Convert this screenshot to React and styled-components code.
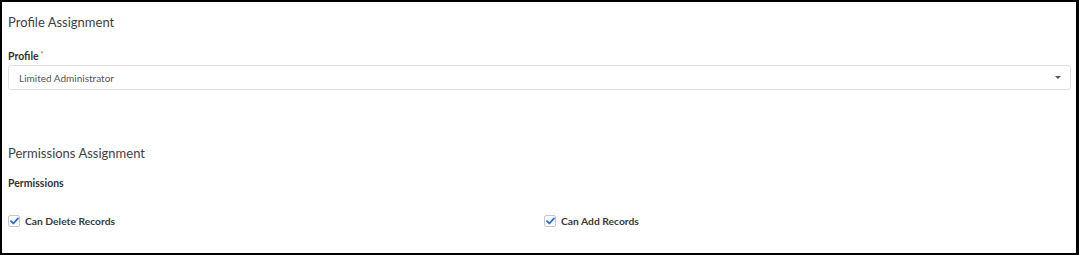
import React from "react";
import styled, { createGlobalStyle } from "styled-components";

const GlobalStyle = createGlobalStyle`
  html, body {
    margin: 0;
    padding: 0;
    background: #fff;
  }
  * {
    box-sizing: border-box;
  }
`;

const Frame = styled.div`
  width: 1079px;
  height: 255px;
  border: 2px solid #000;
  border-right-width: 3px;
  background: #fff;
  padding: 0 6px 0 6px;
  font-family: Lato, "Open Sans", sans-serif;
  color: #444;
`;

const SectionTitle = styled.h2`
  margin: 0;
  font-size: 13px;
  font-weight: 400;
  color: #3f3f3f;
  line-height: 16px;
  padding-top: ${(p) => p.$top}px;
`;

const FieldLabel = styled.div`
  font-size: 10.5px;
  font-weight: 700;
  color: #333;
  line-height: 12px;
  margin-top: ${(p) => p.$top}px;
`;

const Required = styled.span`
  color: #e05252;
  font-size: 7px;
  vertical-align: top;
  margin-left: 2px;
  position: relative;
  top: -2px;
`;

const Select = styled.div`
  margin-top: 3px;
  height: 25px;
  width: 1063px;
  border: 1px solid #e2e2e2;
  border-radius: 3px;
  display: flex;
  align-items: center;
  justify-content: space-between;
  padding: 0 9px 0 10px;
  font-size: 10px;
  color: #555;
`;

const Caret = styled.span`
  width: 0;
  height: 0;
  border-left: 3px solid transparent;
  border-right: 3px solid transparent;
  border-top: 3px solid #555;
`;

const CheckGrid = styled.div`
  display: grid;
  grid-template-columns: 536px 1fr;
  margin-top: 26px;
`;

const CheckRow = styled.label`
  display: flex;
  align-items: center;
  gap: 5px;
  font-size: 10.3px;
  font-weight: 700;
  color: #3a3a3a;
`;

const Box = styled.span`
  width: 12px;
  height: 12px;
  border: 1px solid #c8c8c8;
  border-radius: 2px;
  display: flex;
  align-items: center;
  justify-content: center;
  background: #fafafa;
`;

const Check = () => (
  <Box>
    <svg width="9" height="8" viewBox="0 0 9 8">
      <path
        d="M1 4.2 L3.4 6.4 L8 1.4"
        fill="none"
        stroke="#2f6fd0"
        strokeWidth="1.8"
        strokeLinecap="round"
        strokeLinejoin="round"
      />
    </svg>
  </Box>
);

export default function App() {
  return (
    <>
      <GlobalStyle />
      <Frame>
        <SectionTitle $top={12}>Profile Assignment</SectionTitle>
        <FieldLabel $top={20}>
          Profile<Required>*</Required>
        </FieldLabel>
        <Select>
          <span>Limited Administrator</span>
          <Caret />
        </Select>
        <SectionTitle $top={55}>Permissions Assignment</SectionTitle>
        <FieldLabel $top={16}>Permissions</FieldLabel>
        <CheckGrid>
          <CheckRow>
            <Check />
            Can Delete Records
          </CheckRow>
          <CheckRow>
            <Check />
            Can Add Records
          </CheckRow>
        </CheckGrid>
      </Frame>
    </>
  );
}
